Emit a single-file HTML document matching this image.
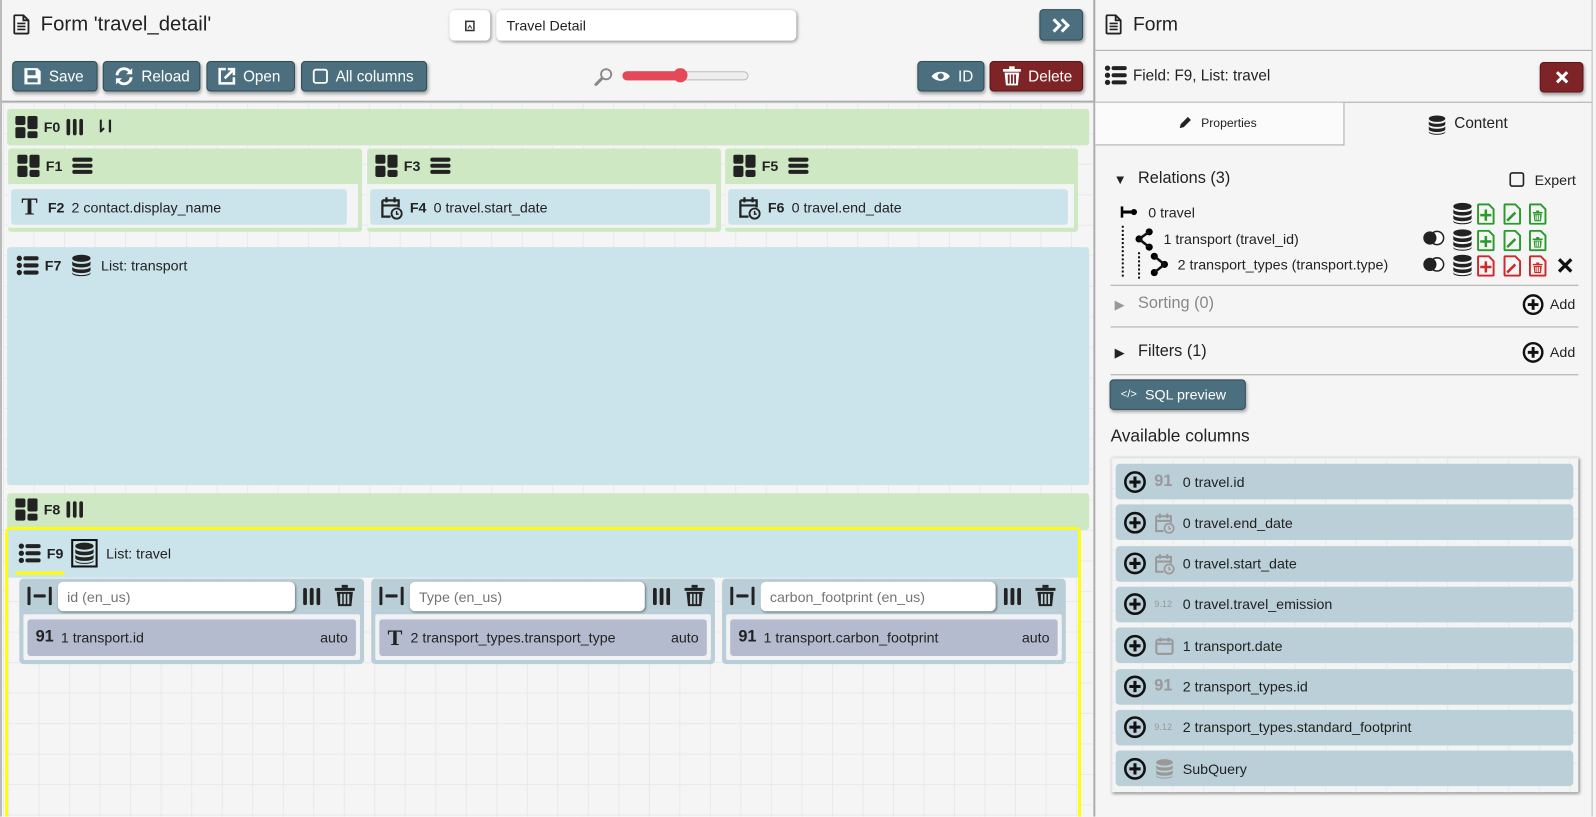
<!DOCTYPE html>
<html style="width:1596px;height:817px;overflow:hidden"><head><meta charset="utf-8">
<style>
*{box-sizing:border-box;margin:0;padding:0}
body{width:1596px;height:817px;overflow:hidden;background:#f5f5f5;font-family:"Liberation Sans",sans-serif;font-size:14px;color:#222;position:relative}
#clip{position:absolute;left:0;top:0;width:1596px;height:817px;overflow:hidden}
#w{position:absolute;left:0;top:0;width:1569px;height:803px;transform:scale(1.017);transform-origin:0 0;overflow:hidden}
.a{position:absolute}
.btn{position:absolute;background:#4b6f7e;color:#fff;border:1px solid #2f4a55;border-radius:4px;box-shadow:1px 2px 3px rgba(0,0,0,.35);font-size:15px;display:flex;align-items:center;gap:7px;padding-left:10px}
.red{background:#7e2426;border-color:#5a1618}
.green{background:#cfe8c4;border-radius:3px}
.blue{background:#cbe3ea;border-radius:3px}
.hdr{position:absolute;display:flex;align-items:center;gap:6px;font-weight:bold;font-size:14px}
.fld{position:absolute;background:#cbe3ea;border-radius:3px;display:flex;align-items:center;gap:7px;padding-left:10px;font-size:14px}
.grid{background-color:#f5f5f5;background-image:linear-gradient(#e6eaec 1px,transparent 1px),linear-gradient(90deg,#e6eaec 1px,transparent 1px);background-size:30px 30px}
.col{position:absolute;background:#b9ced6;border-radius:4px}
.col input{position:absolute;left:38px;top:3px;height:29px;border:none;border-radius:5px;background:#fff;box-shadow:1px 1px 2px rgba(0,0,0,.4);padding-left:9px;font:14px "Liberation Sans",sans-serif;color:#777}
.col .it{position:absolute;left:8px;right:8px;top:40px;height:36px;background:#b5bbcf;border-radius:3px;display:flex;align-items:center;padding:0 8px;font-size:14px}
.col .in{position:absolute;left:4px;right:4px;top:35px;bottom:4px;background:#f0f2f3;border-radius:2px}
.av{position:absolute;left:1097px;width:450px;height:35px;background:#bacfd7;border-radius:4px;display:flex;align-items:center;padding-left:8px;gap:8px;font-size:14px}
.hr{position:absolute;height:1px;background:#aaa}
</style></head><body>
<svg width="0" height="0" style="position:absolute">
<defs>
<symbol id="doc" viewBox="0 0 16 20"><path d="M2 1h8l5 5v12a1 1 0 0 1-1 1H2a1 1 0 0 1-1-1V2a1 1 0 0 1 1-1z M10 1v5h5" fill="none" stroke="#222" stroke-width="1.8"/><path d="M4 9h8M4 12h8M4 15h8" stroke="#222" stroke-width="1.6"/></symbol>
<symbol id="grd" viewBox="0 0 22 22"><rect x="0" y="0" width="10" height="9" rx="2"/><rect x="0" y="11" width="10" height="11" rx="2"/><rect x="12" y="0" width="10" height="13" rx="2"/><rect x="12" y="15" width="10" height="7" rx="2"/></symbol>
<symbol id="bars" viewBox="0 0 18 20"><rect x="0" y="1" width="4" height="18" rx="2"/><rect x="7" y="1" width="4" height="18" rx="2"/><rect x="14" y="1" width="4" height="18" rx="2"/></symbol>
<symbol id="hb" viewBox="0 0 20 18"><rect x="0" y="1" width="20" height="4" rx="2"/><rect x="0" y="7" width="20" height="4" rx="2"/><rect x="0" y="13" width="20" height="4" rx="2"/></symbol>
<symbol id="lst" viewBox="0 0 22 20"><circle cx="3" cy="3" r="2.6"/><circle cx="3" cy="10" r="2.6"/><circle cx="3" cy="17" r="2.6"/><rect x="7" y="1" width="15" height="4" rx="2"/><rect x="7" y="8" width="15" height="4" rx="2"/><rect x="7" y="15" width="15" height="4" rx="2"/></symbol>
<symbol id="db" viewBox="0 0 20 22"><ellipse cx="10" cy="4" rx="9" ry="3.5"/><path d="M1 6.5c0 4 18 4 18 0v3.5c0 4-18 4-18 0z M1 12c0 4 18 4 18 0v3.5c0 4-18 4-18 0z M1 17.5c0 4 18 4 18 0v1c0 4-18 4-18 0z"/></symbol>
<symbol id="trash" viewBox="0 0 20 22"><rect x="0" y="3" width="20" height="3" rx="1"/><rect x="7" y="0" width="6" height="3"/><path d="M2 7h16l-1.5 14h-13z M5.5 9v10h2V9z M9 9v10h2V9z M12.5 9v10h2V9z" fill-rule="evenodd"/></symbol>
<symbol id="wid" viewBox="0 0 24 20"><rect x="0" y="1" width="3" height="18" rx="1"/><rect x="21" y="1" width="3" height="18" rx="1"/><rect x="6" y="8.5" width="12" height="3" rx="1"/></symbol>
<symbol id="pc" viewBox="0 0 22 22"><circle cx="11" cy="11" r="9.5" fill="none" stroke="#111" stroke-width="2.5"/><path d="M11 5.5v11M5.5 11h11" stroke="#111" stroke-width="3"/></symbol>
<symbol id="cal" viewBox="0 0 22 24"><path d="M2 5h16v7M2 5v16h8M2 10h16M6 2v5M14 2v5" fill="none" stroke="currentColor" stroke-width="2.2"/><circle cx="16" cy="18" r="5" fill="none" stroke="currentColor" stroke-width="1.8"/><path d="M16 15.5v3h2" fill="none" stroke="currentColor" stroke-width="1.5"/></symbol>
<symbol id="file" viewBox="0 0 18 22"><path d="M2 1h10l5 5v14a1 1 0 0 1-1 1H2a1 1 0 0 1-1-1V2a1 1 0 0 1 1-1z" fill="none" stroke="currentColor" stroke-width="2"/></symbol>
</defs></svg>
<div id="clip"><div id="w">
<svg class="a" style="left:13px;top:14px" width="16" height="20"><use href="#doc"/></svg>
<div class="a" style="left:40px;top:13px;font-size:20px">Form 'travel_detail'</div>
<div class="a" style="left:442px;top:10px;width:40px;height:30px;background:#fff;border-radius:5px;box-shadow:1px 1px 3px rgba(0,0,0,.4)"><svg class="a" style="left:15px;top:10px" width="10" height="11"><rect x="1" y="1" width="8" height="9" fill="none" stroke="#333" stroke-width="1.5"/><path d="M3 8l2-3 2 3" stroke="#333" fill="none"/></svg></div>
<div class="a" style="left:488px;top:10px;width:295px;height:30px;background:#fff;border-radius:5px;box-shadow:1px 1px 3px rgba(0,0,0,.4);padding:7px 10px;font-size:14px">Travel Detail</div>
<div class="btn" style="left:1022px;top:9px;width:43px;height:31px;justify-content:center;padding:0"><svg width="20" height="16"><path d="M2 2l6 6-6 6M10 2l6 6-6 6" fill="none" stroke="#fff" stroke-width="3"/></svg></div>

<div class="btn" style="left:12px;top:60px;width:84px;height:30px"><svg width="18" height="18"><path d="M1 1h13l3 3v13H1z" fill="#fff"/><rect x="4" y="3" width="8" height="5" fill="#4b6f7e"/><rect x="4" y="11" width="10" height="4" fill="#4b6f7e"/></svg>Save</div>
<div class="btn" style="left:101px;top:60px;width:96px;height:30px"><svg width="20" height="18"><path d="M3 8a7 7 0 0 1 13-3M17 10a7 7 0 0 1-13 3" fill="none" stroke="#fff" stroke-width="2.8"/><path d="M18 1v6h-6zM2 17v-6h6z" fill="#fff"/></svg>Reload</div>
<div class="btn" style="left:203px;top:60px;width:87px;height:30px"><svg width="18" height="18"><path d="M8 2H2v14h14v-6" fill="none" stroke="#fff" stroke-width="2.5"/><path d="M7 11l8-8M10 2h6v6" fill="none" stroke="#fff" stroke-width="2.5"/></svg>Open</div>
<div class="btn" style="left:296px;top:60px;width:124px;height:30px"><svg width="16" height="16"><rect x="1.5" y="1.5" width="13" height="13" rx="2" fill="none" stroke="#fff" stroke-width="1.8"/></svg>All columns</div>

<svg class="a" style="left:584px;top:66px" width="20" height="20"><circle cx="12" cy="7" r="5" fill="none" stroke="#888" stroke-width="1.8"/><path d="M8 11l-6 6" stroke="#888" stroke-width="3" stroke-linecap="round"/></svg>
<div class="a" style="left:612px;top:70px;width:124px;height:9px;border:1px solid #bbb;border-radius:5px;background:#eee"></div>
<div class="a" style="left:612px;top:70px;width:60px;height:9px;border-radius:5px;background:#e54858"></div>
<div class="a" style="left:662px;top:67px;width:14px;height:14px;border-radius:50%;background:#e54858"></div>

<div class="btn" style="left:902px;top:60px;width:66px;height:30px;padding-left:12px"><svg width="20" height="12"><path d="M1 6c4-6 14-6 18 0c-4 6-14 6-18 0z" fill="#fff"/><circle cx="10" cy="6" r="3" fill="#4b6f7e"/></svg>ID</div>
<div class="btn red" style="left:973px;top:60px;width:92px;height:30px;padding-left:12px"><svg width="18" height="20"><use href="#trash" fill="#fff"/></svg>Delete</div>

<div class="a" style="left:0;top:99px;width:1075px;height:2px;background:#aaa"></div>
<div class="a" style="left:1075px;top:0;width:2px;height:803px;background:#aaa"></div>
<div class="a" style="left:0;top:0;width:2px;height:803px;background:#bbb"></div>

<div class="a grid" style="left:3px;top:101px;width:1072px;height:702px"></div>

<div class="a green" style="left:7px;top:107px;width:1064px;height:36px"></div>
<div class="hdr" style="left:15px;top:114px"><svg width="22" height="22"><use href="#grd" fill="#222"/></svg>F0<svg width="17" height="18"><use href="#bars" fill="#222"/></svg><span style="font-size:16px;margin-left:4px">⇂ꓲ</span></div>

<div class="a green" style="left:8px;top:146px;width:348px;height:82px"></div>
<div class="a green" style="left:361px;top:146px;width:348px;height:82px"></div>
<div class="a green" style="left:713px;top:146px;width:347px;height:82px"></div>
<div class="hdr" style="left:17px;top:152px"><svg width="22" height="22"><use href="#grd" fill="#222"/></svg>F1<svg width="20" height="18" style="margin-left:4px"><use href="#hb" fill="#222"/></svg></div>
<div class="hdr" style="left:369px;top:152px"><svg width="22" height="22"><use href="#grd" fill="#222"/></svg>F3<svg width="20" height="18" style="margin-left:4px"><use href="#hb" fill="#222"/></svg></div>
<div class="hdr" style="left:721px;top:152px"><svg width="22" height="22"><use href="#grd" fill="#222"/></svg>F5<svg width="20" height="18" style="margin-left:4px"><use href="#hb" fill="#222"/></svg></div>
<div class="a" style="left:8px;top:181px;width:344px;height:43px;background:#f3f4f4"></div>
<div class="a" style="left:361px;top:181px;width:343px;height:43px;background:#f3f4f4"></div>
<div class="a" style="left:713px;top:181px;width:343px;height:43px;background:#f3f4f4"></div>
<div class="fld" style="left:11px;top:186px;width:330px;height:35px"><span style="font-family:'Liberation Serif',serif;font-weight:bold;font-size:24px;line-height:1">T</span><b style="margin-left:3px">F2</b>2 contact.display_name</div>
<div class="fld" style="left:364px;top:186px;width:334px;height:35px"><svg width="22" height="24" style="color:#222"><use href="#cal"/></svg><b>F4</b>0 travel.start_date</div>
<div class="fld" style="left:716px;top:186px;width:334px;height:35px"><svg width="22" height="24" style="color:#222"><use href="#cal"/></svg><b>F6</b>0 travel.end_date</div>

<div class="a blue" style="left:7px;top:243px;width:1064px;height:234px"></div>
<div class="hdr" style="left:16px;top:250px"><svg width="22" height="20"><use href="#lst" fill="#222"/></svg>F7<svg width="20" height="22" style="margin-left:4px"><use href="#db" fill="#222"/></svg><span style="font-weight:normal;margin-left:3px">List: transport</span></div>

<div class="a green" style="left:7px;top:485px;width:1064px;height:36px"></div>
<div class="hdr" style="left:15px;top:490px"><svg width="22" height="22"><use href="#grd" fill="#222"/></svg>F8<svg width="17" height="18"><use href="#bars" fill="#222"/></svg></div>

<div class="a" style="left:5px;top:518px;width:1058px;height:285px;border:3px solid #ffff00;border-bottom:none;border-radius:6px 6px 0 0"></div>
<div class="a" style="left:8px;top:521px;width:1052px;height:40px;background:#cbe3ea"></div>
<div class="a grid" style="left:8px;top:561px;width:1052px;height:242px"></div>
<div class="hdr" style="left:18px;top:530px"><svg width="22" height="20"><use href="#lst" fill="#222"/></svg>F9<span style="border:2px solid #111;padding:1px;display:inline-flex;margin-left:2px"><svg width="20" height="22"><use href="#db" fill="#222"/></svg></span><span style="font-weight:normal;margin-left:2px">List: travel</span></div>
<div class="a" style="left:8px;top:561px;width:1052px;height:7px;background:#cbe3ea"></div>
<div class="a" style="left:15px;top:562px;width:48px;height:3px;background:#ffff00"></div>

<div class="col" style="left:19px;top:569px;width:339px;height:84px"><svg class="a" style="left:8px;top:7px" width="24" height="20"><use href="#wid" fill="#222"/></svg><input style="width:233px" placeholder="id (en_us)"><svg class="a" style="left:279px;top:8px" width="17" height="19"><use href="#bars" fill="#222"/></svg><svg class="a" style="left:310px;top:6px" width="20" height="22"><use href="#trash" fill="#222"/></svg><div class="in"></div><div class="it"><b style="font-size:16px;margin-right:7px">91</b>1 transport.id<span style="margin-left:auto">auto</span></div></div>
<div class="col" style="left:365px;top:569px;width:338px;height:84px"><svg class="a" style="left:8px;top:7px" width="24" height="20"><use href="#wid" fill="#222"/></svg><input style="width:231px" placeholder="Type (en_us)"><svg class="a" style="left:277px;top:8px" width="17" height="19"><use href="#bars" fill="#222"/></svg><svg class="a" style="left:308px;top:6px" width="20" height="22"><use href="#trash" fill="#222"/></svg><div class="in"></div><div class="it"><span style="font-family:'Liberation Serif',serif;font-weight:bold;font-size:22px;margin-right:8px">T</span>2 transport_types.transport_type<span style="margin-left:auto">auto</span></div></div>
<div class="col" style="left:710px;top:569px;width:338px;height:84px"><svg class="a" style="left:8px;top:7px" width="24" height="20"><use href="#wid" fill="#222"/></svg><input style="width:231px" placeholder="carbon_footprint (en_us)"><svg class="a" style="left:277px;top:8px" width="17" height="19"><use href="#bars" fill="#222"/></svg><svg class="a" style="left:308px;top:6px" width="20" height="22"><use href="#trash" fill="#222"/></svg><div class="in"></div><div class="it"><b style="font-size:16px;margin-right:7px">91</b>1 transport.carbon_footprint<span style="margin-left:auto">auto</span></div></div>

<!-- RIGHT PANE -->
<div class="a" style="left:1565px;top:0;width:1px;height:803px;background:#bbb"></div>
<svg class="a" style="left:1087px;top:14px" width="16" height="20"><use href="#doc"/></svg>
<div class="a" style="left:1114px;top:14px;font-size:19px">Form</div>
<div class="hr" style="left:1077px;top:49px;width:488px"></div>
<svg class="a" style="left:1086px;top:64px" width="22" height="20"><use href="#lst" fill="#222"/></svg>
<div class="a" style="left:1114px;top:66px;font-size:15px">Field: F9, List: travel</div>
<div class="btn red" style="left:1514px;top:61px;width:43px;height:30px;justify-content:center;padding:0"><svg width="14" height="14"><path d="M2 2l10 10M12 2L2 12" stroke="#fff" stroke-width="3"/></svg></div>
<div class="hr" style="left:1077px;top:100px;width:488px"></div>
<div class="a" style="left:1077px;top:101px;width:245px;height:42px;background:#fbfbfb;border-right:1px solid #aaa;border-bottom:1px solid #aaa"></div>
<svg class="a" style="left:1159px;top:115px" width="12" height="12"><path d="M1 11l1-4 7-7 3 3-7 7z" fill="#222"/></svg>
<div class="a" style="left:1181px;top:114px;font-size:12px">Properties</div>
<svg class="a" style="left:1404px;top:113px" width="18" height="20"><use href="#db" fill="#222"/></svg>
<div class="a" style="left:1430px;top:113px;font-size:15px">Content</div>

<div class="a" style="left:1095px;top:169px;font-size:13px">▼</div>
<div class="a" style="left:1119px;top:167px;font-size:16px">Relations (3)</div>
<svg class="a" style="left:1484px;top:169px" width="15" height="15"><rect x="1" y="1" width="13" height="13" rx="2" fill="none" stroke="#222" stroke-width="1.6"/></svg>
<div class="a" style="left:1509px;top:169px;font-size:14px">Expert</div>

<svg class="a" style="left:1100px;top:200px" width="56" height="80"><rect x="2" y="3" width="2.5" height="11"/><rect x="3" y="7" width="10" height="3"/><circle cx="15" cy="8.5" r="3"/><path d="M4 22v52M20 48v26" stroke="#111" stroke-width="2" stroke-dasharray="2,2"/><circle cx="20" cy="35" r="3.5"/><circle cx="30" cy="28" r="3.5"/><circle cx="30" cy="43" r="3.5"/><path d="M30 28L20 35L30 43" stroke="#111" stroke-width="2.5" fill="none"/><circle cx="35" cy="52" r="3.5"/><circle cx="35" cy="68" r="3.5"/><circle cx="45" cy="60" r="3.5"/><path d="M35 52L45 60L35 68" stroke="#111" stroke-width="2.5" fill="none"/></svg>
<div class="a" style="left:1129px;top:201px;font-size:14px">0 travel</div>
<div class="a" style="left:1144px;top:227px;font-size:14px">1 transport (travel_id)</div>
<div class="a" style="left:1158px;top:252px;font-size:14px">2 transport_types (transport.type)</div>

<svg class="a" style="left:1396px;top:199px" width="160" height="76">
<g fill="#222"><use href="#db" x="32" y="0" width="20" height="22"/><use href="#db" x="32" y="26" width="20" height="22"/><use href="#db" x="32" y="51" width="20" height="22"/>
<circle cx="17" cy="35" r="6.5" fill="#fff" stroke="#222" stroke-width="1.5"/><circle cx="10" cy="35" r="6.5"/>
<circle cx="17" cy="61" r="6.5" fill="#fff" stroke="#222" stroke-width="1.5"/><circle cx="10" cy="61" r="6.5"/></g>
<g style="color:#2a9a2a"><use href="#file" x="56" y="1" width="18" height="21"/><use href="#file" x="82" y="1" width="18" height="21"/><use href="#file" x="107" y="1" width="18" height="21"/><use href="#file" x="56" y="27" width="18" height="21"/><use href="#file" x="82" y="27" width="18" height="21"/><use href="#file" x="107" y="27" width="18" height="21"/></g>
<g stroke="#2a9a2a" stroke-width="2.5" fill="none"><path d="M65 7v11M59.5 12.5h11M65 33v11M59.5 38.5h11M86 18l8-8M86 44l8-8"/></g>
<g fill="#2a9a2a"><use href="#trash" x="111" y="8" width="10" height="11"/><use href="#trash" x="111" y="34" width="10" height="11"/></g>
<g style="color:#cc2a2a"><use href="#file" x="56" y="52" width="18" height="21"/><use href="#file" x="82" y="52" width="18" height="21"/><use href="#file" x="107" y="52" width="18" height="21"/></g>
<g stroke="#cc2a2a" stroke-width="2.5" fill="none"><path d="M65 58v11M59.5 63.5h11M86 69l8-8"/></g>
<use href="#trash" x="111" y="59" width="10" height="11" fill="#cc2a2a"/>
<path d="M137 56l12 12M149 56l-12 12" stroke="#111" stroke-width="3.2"/>
</svg>

<div class="hr" style="left:1092px;top:280px;width:460px"></div>
<div class="a" style="left:1096px;top:292px;font-size:13px;color:#999">▶</div>
<div class="a" style="left:1119px;top:290px;font-size:16px;color:#888">Sorting (0)</div>
<svg class="a" style="left:1497px;top:289px" width="21" height="21"><use href="#pc"/></svg>
<div class="a" style="left:1524px;top:291px;font-size:14px">Add</div>
<div class="hr" style="left:1092px;top:321px;width:460px"></div>
<div class="a" style="left:1096px;top:339px;font-size:13px">▶</div>
<div class="a" style="left:1119px;top:337px;font-size:16px">Filters (1)</div>
<svg class="a" style="left:1497px;top:336px" width="21" height="21"><use href="#pc"/></svg>
<div class="a" style="left:1524px;top:338px;font-size:14px">Add</div>
<div class="hr" style="left:1092px;top:368px;width:460px"></div>
<div class="btn" style="left:1091px;top:373px;width:134px;height:30px;font-size:14px;gap:8px"><span style="font-size:11px">&lt;/&gt;</span>SQL preview</div>
<div class="a" style="left:1092px;top:419px;font-size:17px">Available columns</div>

<div class="a grid" style="left:1093px;top:450px;width:459px;height:329px;box-shadow:1px 1px 3px rgba(0,0,0,.5);background-color:#f3f4f4"></div>
<div class="av" style="top:456px"><svg width="22" height="22"><use href="#pc"/></svg><b style="color:#999;font-size:16px;width:20px">91</b>0 travel.id</div>
<div class="av" style="top:496.3px"><svg width="22" height="22"><use href="#pc"/></svg><svg width="20" height="22" style="color:#999"><use href="#cal"/></svg>0 travel.end_date</div>
<div class="av" style="top:536.6px"><svg width="22" height="22"><use href="#pc"/></svg><svg width="20" height="22" style="color:#999"><use href="#cal"/></svg>0 travel.start_date</div>
<div class="av" style="top:576.9px"><svg width="22" height="22"><use href="#pc"/></svg><span style="color:#999;font-size:9px;width:20px">9.12</span>0 travel.travel_emission</div>
<div class="av" style="top:617.2px"><svg width="22" height="22"><use href="#pc"/></svg><svg width="20" height="20"><rect x="2" y="4" width="16" height="14" rx="2" fill="none" stroke="#999" stroke-width="2"/><path d="M2 8h16M6 2v4M14 2v4" stroke="#999" stroke-width="2"/></svg>1 transport.date</div>
<div class="av" style="top:657.5px"><svg width="22" height="22"><use href="#pc"/></svg><b style="color:#999;font-size:16px;width:20px">91</b>2 transport_types.id</div>
<div class="av" style="top:697.8px"><svg width="22" height="22"><use href="#pc"/></svg><span style="color:#999;font-size:9px;width:20px">9.12</span>2 transport_types.standard_footprint</div>
<div class="av" style="top:738.1px"><svg width="22" height="22"><use href="#pc"/></svg><svg width="20" height="20"><use href="#db" fill="#999"/></svg>SubQuery</div>
</div></div>
</body></html>
